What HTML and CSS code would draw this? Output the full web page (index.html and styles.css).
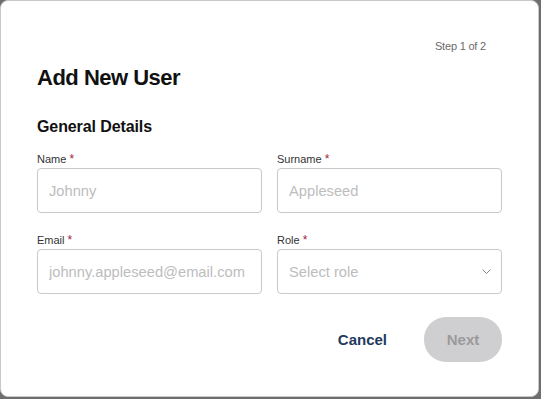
FILE: index.html
```html
<!DOCTYPE html>
<html lang="en">
<head>
    <meta charset="UTF-8">
    <meta name="viewport" content="width=device-width, initial-scale=1.0">
    <title>Add New User</title>
    <link rel="stylesheet" href="styles.css">
</head>
<body>

<!-- Add user dialog -->
<div class="dialog">
    <div class="step">Step 1 of 2</div>
    <h1>Add New User</h1>
    <h2>General Details</h2>

    <form class="form-grid">
        <div class="field">
            <label for="firstName">Name <span class="req">*</span></label>
            <input type="text" id="firstName" placeholder="Johnny">
        </div>
        <div class="field">
            <label for="surname">Surname <span class="req">*</span></label>
            <input type="text" id="surname" placeholder="Appleseed">
        </div>
        <div class="field">
            <label for="email">Email <span class="req">*</span></label>
            <input type="text" id="email" placeholder="johnny.appleseed@email.com">
        </div>
        <div class="field">
            <label for="role">Role <span class="req">*</span></label>
            <div class="select-box" id="role">
                <span>Select role</span>
                <svg width="9" height="5" viewBox="0 0 9 5"><path d="M0.5 0.5 L4.5 4.5 L8.5 0.5" fill="none" stroke="#8a8a8a" stroke-width="1"/></svg>
            </div>
        </div>
    </form>

    <div class="actions">
        <button class="btn-cancel">Cancel</button>
        <button class="btn-next" disabled>Next</button>
    </div>
</div>

</body>
</html>
```

FILE: styles.css
```css
body {
    margin: 0;
    background-color: #6e6e6e;
    font-family: "Liberation Sans", Arial, sans-serif;
}
.dialog {
    width: 539px;
    height: 397px;
    box-sizing: border-box;
    background: #fff;
    border: 1px solid #c9c9c9;
    border-radius: 8px;
    padding: 38px 36px 0 36px;
}
.step {
    text-align: right;
    font-size: 11px;
    line-height: 14px;
    letter-spacing: -0.2px;
    color: #6b6b6b;
    margin-right: 16px;
}
h1 {
    margin: 12px 0 0;
    font-size: 22px;
    line-height: 26px;
    letter-spacing: -0.5px;
    color: #111;
}
h2 {
    margin: 26px 0 0;
    font-size: 16px;
    line-height: 20px;
    letter-spacing: -0.1px;
    color: #111;
}
.form-grid {
    display: grid;
    grid-template-columns: 1fr 1fr;
    column-gap: 15px;
    row-gap: 20px;
    margin-top: 15px;
}
.field label {
    display: block;
    font-size: 11px;
    line-height: 14px;
    color: #333;
    margin-bottom: 2px;
}
.req {
    color: #a3223b;
    font-size: 12px;
}
.field input, .select-box {
    width: 100%;
    height: 45px;
    box-sizing: border-box;
    border: 1px solid #c9c9c9;
    border-radius: 4px;
    padding: 0 11px;
    font-family: "Liberation Sans", Arial, sans-serif;
    font-size: 14.7px;
    color: #333;
    outline: none;
}
.field input::placeholder {
    color: #bdbdbd;
}
.select-box {
    display: flex;
    align-items: center;
    justify-content: space-between;
    color: #bdbdbd;
    padding-right: 10px;
}
.actions {
    display: flex;
    justify-content: flex-end;
    align-items: center;
    gap: 21px;
    margin-top: 23px;
}
button {
    font-family: "Liberation Sans", Arial, sans-serif;
    font-size: 15px;
    font-weight: bold;
    border: none;
    cursor: pointer;
}
.btn-cancel {
    background: none;
    color: #1f3a5c;
    padding: 0 16px 0 14px;
    height: 44px;
}
.btn-next {
    width: 78px;
    height: 45px;
    border-radius: 22px;
    background-color: #cfcfd1;
    color: #9a9a9a;
}
```
